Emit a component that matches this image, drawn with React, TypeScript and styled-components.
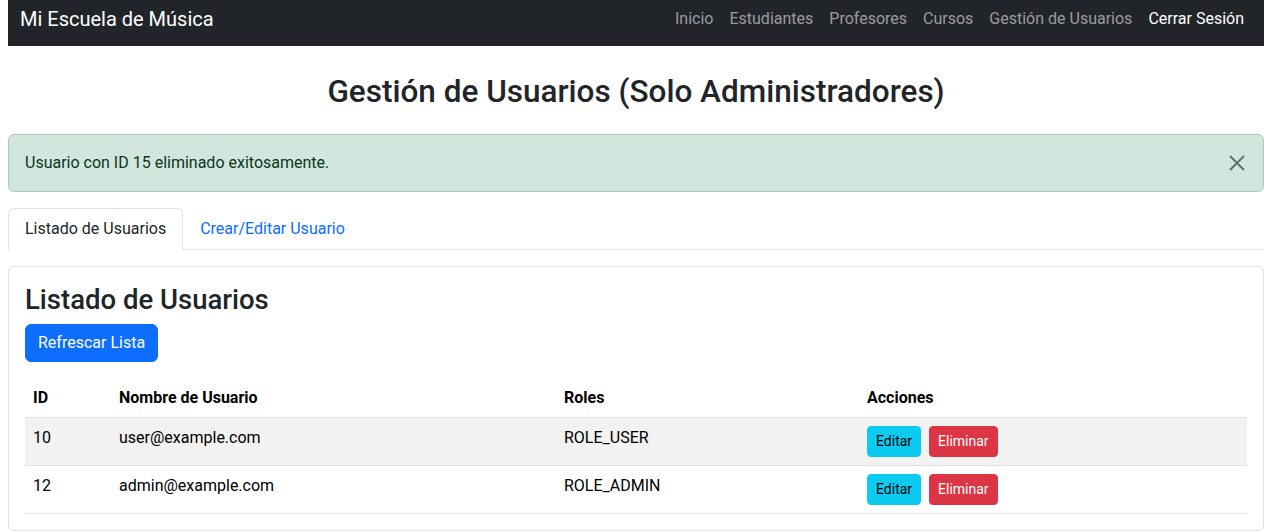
import React, { useState } from "react";
import styled, { createGlobalStyle } from "styled-components";

const GlobalStyle = createGlobalStyle`
  * { box-sizing: border-box; }
  body {
    margin: 0;
    padding: 0 12px 0 8px;
    font-family: Roboto, "Liberation Sans", sans-serif;
    font-size: 16px;
    line-height: 1.5;
    color: #212529;
    background: #fff;
  }
`;

interface User {
  id: number;
  username: string;
  roles: string;
}

const users: User[] = [
  { id: 10, username: "user@example.com", roles: "ROLE_USER" },
  { id: 12, username: "admin@example.com", roles: "ROLE_ADMIN" },
];

const navLinks = ["Inicio", "Estudiantes", "Profesores", "Cursos", "Gestión de Usuarios"];

const App: React.FC = () => {
  const [showAlert, setShowAlert] = useState(true);
  const [tab, setTab] = useState(0);

  return (
    <>
      <GlobalStyle />
      <Navbar>
        <Brand href="#">Mi Escuela de Música</Brand>
        <NavList>
          {navLinks.map((l) => (
            <NavLink key={l} href="#">
              {l}
            </NavLink>
          ))}
          <NavLink href="#" $active>
            Cerrar Sesión
          </NavLink>
        </NavList>
      </Navbar>

      <PageTitle>Gestión de Usuarios (Solo Administradores)</PageTitle>

      {showAlert && (
        <Alert>
          Usuario con ID 15 eliminado exitosamente.
          <CloseButton onClick={() => setShowAlert(false)} aria-label="Close">
            <svg width="16" height="16" viewBox="0 0 16 16">
              <path d="M1 1L15 15M15 1L1 15" stroke="currentColor" strokeWidth="1.8" />
            </svg>
          </CloseButton>
        </Alert>
      )}

      <Tabs>
        <Tab $active={tab === 0} onClick={() => setTab(0)}>
          Listado de Usuarios
        </Tab>
        <Tab $active={tab === 1} onClick={() => setTab(1)}>
          Crear/Editar Usuario
        </Tab>
      </Tabs>

      <Card>
        <CardTitle>Listado de Usuarios</CardTitle>
        <PrimaryButton>Refrescar Lista</PrimaryButton>
        <Table>
          <colgroup>
            <col style={{ width: 86 }} />
            <col style={{ width: 445 }} />
            <col style={{ width: 303 }} />
            <col />
          </colgroup>
          <thead>
            <tr>
              <Th>ID</Th>
              <Th>Nombre de Usuario</Th>
              <Th>Roles</Th>
              <Th>Acciones</Th>
            </tr>
          </thead>
          <tbody>
            {users.map((u, i) => (
              <Row key={u.id} $striped={i % 2 === 0}>
                <Td>{u.id}</Td>
                <Td>{u.username}</Td>
                <Td>{u.roles}</Td>
                <Td>
                  <Actions>
                    <SmallButton $variant="info">Editar</SmallButton>
                    <SmallButton $variant="danger">Eliminar</SmallButton>
                  </Actions>
                </Td>
              </Row>
            ))}
          </tbody>
        </Table>
      </Card>
    </>
  );
};

const Navbar = styled.nav`
  display: flex;
  align-items: center;
  justify-content: space-between;
  height: 46px;
  padding: 0 12px 8px;
  background: #212529;
`;

const Brand = styled.a`
  font-size: 20px;
  line-height: 30px;
  color: #fff;
  text-decoration: none;
`;

const NavList = styled.div`
  display: flex;
`;

const NavLink = styled.a<{ $active?: boolean }>`
  padding: 8px;
  color: ${(p) => (p.$active ? "#fff" : "rgba(255, 255, 255, 0.55)")};
  text-decoration: none;
`;

const PageTitle = styled.h2`
  margin: 0 0 23px;
  padding-top: 27px;
  text-align: center;
  font-size: 31.5px;
  font-weight: 500;
  line-height: 1.2;
`;

const Alert = styled.div`
  position: relative;
  padding: 16px;
  margin-bottom: 16px;
  background: #d1e7dd;
  border: 1px solid #a3cfbb;
  border-radius: 6px;
  color: #0a3622;
`;

const CloseButton = styled.button`
  position: absolute;
  top: 0;
  right: 0;
  width: 52px;
  height: 100%;
  display: flex;
  align-items: center;
  justify-content: center;
  background: none;
  border: none;
  color: #5f6f67;
  cursor: pointer;
`;

const Tabs = styled.div`
  display: flex;
  border-bottom: 1px solid #dee2e6;
  margin-bottom: 16px;
`;

const Tab = styled.button<{ $active: boolean }>`
  font: inherit;
  padding: 8px 16px;
  margin-bottom: -1px;
  background: ${(p) => (p.$active ? "#fff" : "transparent")};
  color: ${(p) => (p.$active ? "#212529" : "#0d6efd")};
  border-style: solid;
  border-width: 1px;
  border-color: ${(p) => (p.$active ? "#dee2e6 #dee2e6 #fff" : "transparent")};
  border-radius: 6px 6px 0 0;
  outline: none;
  cursor: pointer;
`;

const Card = styled.div`
  border: 1px solid #dee2e6;
  border-radius: 6px;
  padding: 16px;
`;

const CardTitle = styled.h3`
  margin: 0 0 8px;
  font-size: 27.5px;
  font-weight: 500;
  line-height: 1.2;
`;

const PrimaryButton = styled.button`
  font: inherit;
  padding: 6px 12px;
  background: #0d6efd;
  color: #fff;
  border: 1px solid #0d6efd;
  border-radius: 6px;
  margin-bottom: 16px;
  cursor: pointer;
`;

const Table = styled.table`
  width: 100%;
  table-layout: fixed;
  border-collapse: collapse;
  color: #000;
`;

const Th = styled.th`
  text-align: left;
  padding: 8px 8px 7px;
  font-weight: 700;
  border-bottom: 1px solid #dee2e6;
`;

const Row = styled.tr<{ $striped: boolean }>`
  background: ${(p) => (p.$striped ? "#f2f2f2" : "#fff")};
`;

const Td = styled.td`
  padding: 8px;
  vertical-align: top;
  border-bottom: 1px solid #dee2e6;
`;

const Actions = styled.div`
  display: flex;
  gap: 8px;
`;

const SmallButton = styled.button<{ $variant: "info" | "danger" }>`
  font-family: inherit;
  font-size: 14px;
  line-height: 1.5;
  padding: 4px 8px;
  border-radius: 4px;
  border: 1px solid ${(p) => (p.$variant === "info" ? "#0dcaf0" : "#dc3545")};
  background: ${(p) => (p.$variant === "info" ? "#0dcaf0" : "#dc3545")};
  color: ${(p) => (p.$variant === "info" ? "#000" : "#fff")};
  cursor: pointer;
`;

export default App;
